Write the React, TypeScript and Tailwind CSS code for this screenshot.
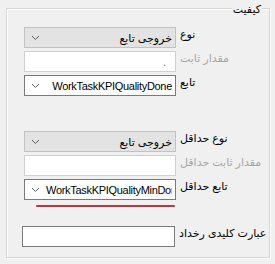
import React from "react";

const Chevron = () => (
  <svg width="9" height="6" viewBox="0 0 9 6" className="shrink-0">
    <polyline points="1,1 4.5,4.5 8,1" fill="none" stroke="#5a5a5a" strokeWidth="1" />
  </svg>
);

const font = { fontFamily: '"Liberation Sans", "DejaVu Sans", sans-serif' };

function Combo({ text, grey, clip, latin }: { text: string; grey?: boolean; clip?: boolean; latin?: boolean }) {
  return (
    <div
      className={
        "w-[152px] h-[21px] flex items-center pl-[6px] pr-[3px] border shrink-0 " +
        (grey ? "bg-[#e3e3e3] border-[#c2c2c2]" : "bg-white border-[#7a7a7a]")
      }
    >
      <Chevron />
      <div className={"flex-1 min-w-0 overflow-hidden whitespace-nowrap flex ml-[6px] " + (clip ? "justify-start" : "justify-end")}>
        <span className={"text-[11px] leading-[14px] text-black " + (latin ? "tracking-[-0.3px]" : "")}>{text}</span>
      </div>
    </div>
  );
}

function Row({ children, label, disabled }: { children: React.ReactNode; label: string; disabled?: boolean }) {
  return (
    <div className="flex items-start">
      {children}
      <span
        dir="rtl"
        className={"ml-[4px] text-[11px] leading-[14px] whitespace-nowrap " + (disabled ? "text-[#a6a6a6]" : "text-black")}
      >
        {label}
      </span>
    </div>
  );
}

export default function App() {
  return (
    <div className="w-[275px] h-[264px] bg-[#f0f0f0] pt-[8px] pl-[6px]" style={font}>
      <div className="relative w-[264px] h-[250px] border border-[#d5d5d5] shadow-[inset_1px_1px_0_#ffffff,1px_1px_0_#ffffff] pt-[18px] pl-[17px]">
        <span dir="rtl" className="absolute right-[7px] top-[-7px] bg-[#f0f0f0] px-[1px] text-[11px] leading-[14px] text-black">
          کیفیت
        </span>
        <div className="flex flex-col gap-[3px]">
          <Row label="نوع">
            <Combo text="خروجی تابع" grey />
          </Row>
          <Row label="مقدار ثابت" disabled>
            <div className="w-[152px] h-[21px] bg-white border border-[#d0d0d0] flex items-center justify-end pr-[9px]">
              <span className="text-[11px] leading-[14px] text-[#6d6d6d]">.</span>
            </div>
          </Row>
          <Row label="تابع">
            <Combo text="WorkTaskKPIQualityDone" latin />
          </Row>
        </div>
        <div className="flex flex-col gap-[3px] mt-[35px]">
          <Row label="نوع حداقل">
            <Combo text="خروجی تابع" grey />
          </Row>
          <Row label="مقدار ثابت حداقل" disabled>
            <div className="w-[152px] h-[21px] bg-white border border-[#d0d0d0]" />
          </Row>
          <Row label="تابع حداقل">
            <Combo text="WorkTaskKPIQualityMinDone" clip latin />
          </Row>
        </div>
        <div className="ml-[12px] mt-[5px] w-[139px] h-[2px] rounded-full bg-[#b8393c]" />
        <div className="mt-[19px] -ml-[2px]">
          <Row label="عبارت کلیدی رخداد">
            <div className="w-[153px] h-[21px] bg-white border border-[#7a7a7a]" />
          </Row>
        </div>
      </div>
    </div>
  );
}
